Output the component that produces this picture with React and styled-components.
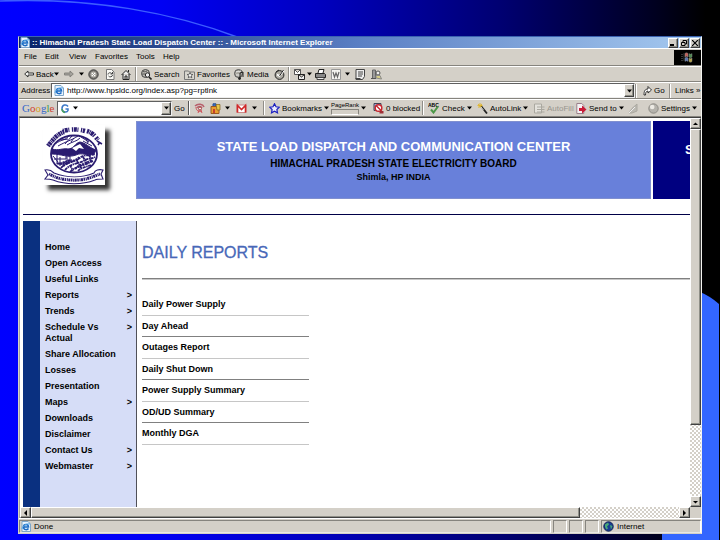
import React from "react";
import styled, { createGlobalStyle, css } from "styled-components";

const face = "#d4d0c8";
const sans = '"Liberation Sans", Arial, sans-serif';

const GlobalStyle = createGlobalStyle`
  * { box-sizing: border-box; }
  body { margin: 0; font-family: ${sans}; color: #000; background: #000060; }
  button, input { font: inherit; color: inherit; margin: 0; padding: 0; border: 0; background: none; border-radius: 0; }
  a { color: inherit; text-decoration: none; }
  svg { display: block; flex: none; }
`;

const Desktop = styled.div`
  position: relative;
  display: flex;
  height: 100vh;
  padding: 36px 18px 6px;
  background: linear-gradient(90deg, #0000ff 0%, #0000f4 22%, #0000c0 44%, #000070 70%, #000020 91%, #000000 98%);
  overflow: hidden;
`;

const Backdrop = styled.svg`
  position: absolute;
  inset: 0;
  width: 100%;
  height: 100%;
`;

const Window = styled.div`
  position: relative;
  flex: 1;
  min-width: 0;
  display: flex;
  flex-direction: column;
  background: ${face};
  border: solid;
  border-width: 1px;
  border-color: #3a62b0 #f4f4f0 ${face} ${face};
  font-size: 8px;
  white-space: nowrap;
`;

const TitleBar = styled.header`
  display: flex;
  align-items: center;
  gap: 2px;
  height: 11px;
  padding: 0 1px;
  color: #fff;
  background: linear-gradient(90deg, #0a246a, #5a7fc4 50%, #a6caf0);
`;

const Title = styled.h1`
  flex: 1;
  margin: 0;
  font-size: 8px;
  line-height: 10px;
`;

const raised = css`
  background: ${face};
  border: 1px solid;
  border-color: #fff #404040 #404040 #fff;
  box-shadow: inset -1px -1px #909088;
`;

const Caption = styled.button`
  ${raised}
  display: grid;
  place-items: center;
  width: 10px;
  height: 10px;
`;

const CaptionGroup = styled.div`
  display: flex;
  gap: 1px;
`;

const Bar = styled.div`
  display: flex;
  align-items: center;
  height: ${(p) => p.$h}px;
  padding-left: ${(p) => p.$pad || 0}px;
  border-top: 1px solid #fff;
  border-bottom: 1px solid #86847e;
`;

const MenuItem = styled.button`
  flex: 0 0 ${(p) => p.$w}px;
  text-align: left;
  line-height: 12px;
`;

const Throbber = styled.div`
  display: grid;
  place-items: center;
  width: 27px;
  height: 15px;
  margin-left: auto;
  background: #000;
`;

const Tool = styled.button`
  display: flex;
  align-items: center;
  gap: 2px;
  flex: 0 0 ${(p) => p.$w}px;
  height: 14px;
  color: ${(p) => (p.$dim ? "#98968f" : "#000")};
`;

const Separator = styled.span`
  flex: none;
  width: 2px;
  height: 14px;
  margin: 0 ${(p) => p.$after || 4}px 0 0;
  border-left: 1px solid ${(p) => (p.$dark ? "#555" : "#908e88")};
  border-right: 1px solid #fff;
`;

const Label = styled.label`
  flex: 0 0 ${(p) => p.$w}px;
`;

const Field = styled.div`
  display: flex;
  align-items: center;
  gap: 3px;
  height: 15px;
  padding-left: 2px;
  background: #fff;
  border: 1px solid;
  border-color: #606060 #eee #eee #606060;
  flex: ${(p) => (p.$w ? `0 0 ${p.$w}px` : "1")};
  min-width: 0;
`;

const TextBox = styled.input`
  flex: 1;
  min-width: 0;
  height: 11px;
  outline: none;
`;

const DropButton = styled.button`
  ${raised}
  display: grid;
  place-items: center;
  width: 10px;
  height: 13px;
`;

const GoogleWord = styled.span`
  flex: 0 0 35px;
  font: 11px "Liberation Serif", serif;
  color: #3566c8;
  b { font-weight: normal; color: #d04030; }
  i { font-style: normal; color: #d8a020; }
  u { text-decoration: none; color: #3c9a48; }
`;

const Rank = styled.span`
  display: flex;
  flex-direction: column;
  gap: 1px;
  font-size: 6px;
  line-height: 6px;
  &::after {
    content: "";
    height: 4px;
    border: 1px solid #86847e;
    border-bottom-color: #fff;
  }
`;

const Viewport = styled.div`
  flex: 1;
  min-height: 0;
  display: grid;
  grid-template-columns: minmax(0, 1fr) 11px;
  grid-template-rows: minmax(0, 1fr) 11px;
  border-top: 1px solid #404040;
  border-left: 1px solid #a8a69f;
`;

const Page = styled.main`
  display: flex;
  flex-direction: column;
  min-width: 0;
  padding: 3px 0 0 3px;
  background: #fff;
  overflow: hidden;
`;

const Masthead = styled.div`
  display: flex;
  gap: 2px;
  height: 78px;
`;

const LogoCell = styled.div`
  flex: 0 0 111px;
  padding: 4px 0 0 20px;
`;

const LogoFrame = styled.div`
  width: 62px;
  height: 60px;
  background: #fff;
  box-shadow: 5px 5px 4px #333;
`;

const Banner = styled.div`
  flex: 1;
  min-width: 0;
  display: flex;
  flex-direction: column;
  align-items: center;
  padding-top: 16px;
  background: #6880da;
  border: 1px solid #8090d0;
  font-weight: bold;
`;

const BannerTitle = styled.h2`
  margin: 0;
  color: #fff;
  font-size: 13px;
  line-height: 18px;
`;

const BannerBoard = styled.p`
  margin: 0;
  font-size: 10px;
  line-height: 16px;
`;

const BannerPlace = styled.p`
  margin: 0;
  font-size: 9px;
  line-height: 11px;
`;

const SidePanel = styled.div`
  flex: 0 0 37px;
  padding: 21px 0 0 32px;
  overflow: hidden;
  background: #000080;
  color: #fff;
  font-size: 13px;
  font-weight: bold;
`;

const Rule = styled.hr`
  width: 100%;
  margin: 15px 0 6px;
  border: 0;
  border-top: 1px solid #000048;
`;

const Body = styled.div`
  flex: 1;
  display: flex;
  min-height: 0;
`;

const Sidebar = styled.nav`
  flex: 0 0 114px;
  padding: 18px 4px 0 5px;
  border-left: 17px solid #0a3080;
  border-right: 1px solid #505058;
  background: #d6ddf7;
`;

const NavLink = styled.a`
  display: flex;
  justify-content: space-between;
  padding: 3px 0 2px;
  font-size: 9px;
  line-height: 11px;
  font-weight: bold;
`;

const NavText = styled.span`
  width: ${(p) => (p.$wrap ? "64px" : "auto")};
  white-space: ${(p) => (p.$wrap ? "normal" : "nowrap")};
`;

const Content = styled.section`
  flex: 1;
  min-width: 0;
  padding: 22px 0 0 5px;
`;

const Heading = styled.h3`
  margin: 0 0 15px;
  color: #4868b8;
  font-size: 16px;
  line-height: 20px;
  font-weight: normal;
  -webkit-text-stroke: 0.3px #4868b8;
`;

const Divider = styled.hr`
  margin: 0 0 14px;
  border: 0;
  border-top: 1px solid #808080;
  border-bottom: 1px solid #c8c8c8;
`;

const ReportList = styled.ul`
  width: 167px;
  margin: 0;
  padding: 0;
  list-style: none;
`;

const ReportItem = styled.li`
  height: 22px;
  padding-top: 4px;
  border-bottom: 1px solid #c6c6c6;
  font-size: 9px;
  line-height: 12px;
  font-weight: bold;
  &:nth-child(even) {
    height: 21px;
    border-color: #808080;
  }
`;

const Track = styled.div`
  display: flex;
  flex-direction: ${(p) => (p.$vertical ? "column" : "row")};
  background: repeating-conic-gradient(#d4d0c8 0 25%, #fff 0 50%) 0 0 / 4px 4px;
`;

const ArrowButton = styled.button`
  ${raised}
  display: grid;
  place-items: center;
  flex: none;
  width: 11px;
  height: 11px;
`;

const Thumb = styled.div`
  ${raised}
  flex: 0 0 ${(p) => p.$size};
`;

const Gap = styled.div`
  flex: 1;
`;

const Corner = styled.div`
  background: ${face};
`;

const StatusBar = styled.footer`
  display: flex;
  gap: 2px;
  height: 15px;
  padding-top: 1px;
  border-top: 1px solid #fff;
`;

const StatusCell = styled.div`
  display: flex;
  align-items: center;
  gap: 3px;
  flex: ${(p) => (p.$w ? `0 0 ${p.$w}px` : "1")};
  padding-left: 1px;
  border: 1px solid;
  border-color: #86847e #fff #e8e8e4 #86847e;
`;

const Svg = ({ w = 11, h = 11, children }) => (
  <svg width={w} height={h} viewBox={`0 0 ${w} ${h}`} aria-hidden="true" fill="none" stroke="#222">
    {children}
  </svg>
);

const Caret = () => (
  <Svg w={5} h={4}><path d="M0 .5h5L2.500 3.500z" fill="#000" stroke="none" /></Svg>
);

const arrows = {
  up: "M1 4h5L3.500 1.500z",
  down: "M1 2h5L3.500 4.500z",
  left: "M5 0v6L2 3z",
  right: "M2 0v6L5 3z",
};
const Arrow = ({ dir }) => (
  <Svg w={7} h={6}><path d={arrows[dir]} fill="#000" stroke="none" /></Svg>
);

const IePage = () => (
  <Svg w={10} h={11}>
    <path d="M1 .5h6l2.500 2.500v7.500H1z" fill="#e8f4ff" stroke="#7fa6c8" />
    <path d="M2.500 6h5c0-3.500-5-3.500-5 0s4 3 5 1.500" stroke="#1c6cc4" strokeWidth="1.500" />
    <path d="M1 8C1 5 6 2 9 3" stroke="#58a8e8" />
  </Svg>
);

const icons = {
  back: (
    <Svg w={10} h={8}><path d="M.7 4 4 1v2h5.500v2H4v2z" fill="#f4f4f0" strokeWidth=".9" /></Svg>
  ),
  forward: (
    <Svg w={10} h={8}><path d="M9.300 4 6 1v2H.5v2H6v2z" fill="#a4a29c" stroke="#807e78" strokeWidth=".9" /></Svg>
  ),
  stop: (
    <Svg><circle cx="5.500" cy="5.500" r="4.700" fill="#77756f" stroke="#444" /><circle cx="5.500" cy="5.500" r="2.500" fill="#aaa8a0" stroke="#c8c6c0" /><path d="m4 4 3 3m0-3-3 3" stroke="#fff" /></Svg>
  ),
  refresh: (
    <Svg><path d="M1.500.5h5l2.500 2.500v7.500H1.500z" fill="#fafaf6" stroke="#777" /><path d="M3 5.500C3 3.500 6 3 7 5M7.500 6c0 2-3 2.500-4 1M7.500 3v2H5.500" stroke="#444" /></Svg>
  ),
  home: (
    <Svg><path d="M.5 6 5 1.500 9.500 6M2 5v5.500h6V5M4 10.500V7h2v3.500M7.500 1v2" fill="#eee" /></Svg>
  ),
  search: (
    <Svg><circle cx="4.500" cy="4.500" r="4" fill="#bbb9b2" stroke="#444" /><path d="M2 2.500c2 1 3-1 4 0M1 5h3" stroke="#555" /><circle cx="6.500" cy="6" r="2.200" fill="#eee" /><path d="m8 8 2.500 2.500" strokeWidth="1.600" /></Svg>
  ),
  favorites: (
    <Svg><path d="M.5 2h4l1 1h5v7.500H.5z" fill="#d8d6cf" stroke="#777" /><path d="m6 3.500.8 1.800 2 .2-1.500 1.300.5 2L6 7.700 4.300 8.800l.4-2L3.200 5.500l2-.2z" fill="#fff" stroke="#333" strokeWidth=".7" /></Svg>
  ),
  media: (
    <Svg><circle cx="4.500" cy="4.500" r="4" fill="#aaa8a0" stroke="#555" /><path d="M2 3c2-1 3 0 5-1M2 6h4" stroke="#eee" /><path d="M6 10V4l3-1v5" /><circle cx="5.500" cy="9.500" r="1" fill="#222" /></Svg>
  ),
  history: (
    <Svg><circle cx="5.500" cy="6" r="4.400" fill="#aaa8a0" /><path d="M3 5.500 5.500 7 10 1.500" stroke="#fff" strokeWidth="1.500" /><path d="m5.500 7 4-6M2 3l3-2" /></Svg>
  ),
  mail: (
    <Svg><path d="M.5.500h6v5h-6zM.5.500l3 3 3-3" fill="#fff" stroke="#555" /><path d="M4.500 5.500h6v5h-6zM4.500 5.500l3 2.500 3-2.500" fill="#eee" /></Svg>
  ),
  print: (
    <Svg><path d="M3 4 4 .5h5L8 4" fill="#fff" /><path d="M.5 4.500h9l1 1v3h-10z" fill="#888" /><path d="M2 8.500h7v2H2z" fill="#eee" stroke="#444" /></Svg>
  ),
  word: (
    <Svg><path d="M.5.500h9v10h-9z" fill="#f4f4f0" stroke="#999" /><path d="m2 3 1.500 5L5 4l1.500 4L8 3" stroke="#666" strokeWidth="1.200" /></Svg>
  ),
  discuss: (
    <Svg><path d="M1 .5h8.500v7l-2 3H1z" fill="#eee" stroke="#444" /><path d="M3 3h5M3 5h5M3 7h4M.5 9.500h5" stroke="#444" /></Svg>
  ),
  messenger: (
    <Svg><path d="M1.500 1h3v8.500h-3z" fill="#999" stroke="#666" /><circle cx="7" cy="4" r="2" fill="#eee" stroke="#555" /><path d="M5 9V6.500h4l1.500 3.500z" fill="#d8d08a" stroke="#888" /><path d="M0 9.500h5" stroke="#555" /></Svg>
  ),
  go: (
    <Svg w={9}><path d="M1 10C1 6 2 4 5 4V1.500L8.500 5 5 8V6C3 6 2.500 8 2.500 10z" fill="#fff" strokeWidth=".9" /></Svg>
  ),
  antenna: (
    <Svg><path d="M1 3c3-3 8-2 9 1M3 5c1-2 4-2 5 0" stroke="#b8606c" strokeWidth="1.500" /><path d="M2 4c0 4 3 5 6 4M4 10l2-5 2 5" stroke="#d05058" /><circle cx="6" cy="5.500" r="1.500" fill="#eee" stroke="#a44" /></Svg>
  ),
  news: (
    <Svg><path d="M1 3.500h8v7H1z" fill="#e8a030" stroke="#9a5820" /><path d="M3 3V.8h3V3" fill="#3c70c8" stroke="#285098" /><path d="M3 6h2v4H3z" fill="#c8402c" stroke="none" /><path d="M6 1.500h4V7H7z" fill="#e8c848" stroke="#806020" strokeWidth=".7" /></Svg>
  ),
  gmail: (
    <Svg><path d="M.8 2h9.400v7.500H.8z" fill="#fff" stroke="#c88" /><path d="M1.500 9.500v-7l4 4 4-4v7" stroke="#d02828" strokeWidth="1.600" /></Svg>
  ),
  star: (
    <Svg><path d="m5.500.8 1.500 3 3.300.4L7.900 6.500l.6 3.400-3-1.600-3 1.600.6-3.400L.7 4.200 4 3.800z" fill="#eef" stroke="#1c20c0" strokeWidth="1.200" /></Svg>
  ),
  blocked: (
    <Svg><path d="M1 .5h7v7H1z" fill="#9cb0e0" stroke="#445" /><circle cx="5.500" cy="5" r="3.300" fill="#fff" stroke="#c82830" strokeWidth="1.500" /><path d="m3.300 2.800 5 5" stroke="#c82830" strokeWidth="1.400" /><path d="M6.500 8h4v2.500h-4z" fill="#a03038" stroke="none" /></Svg>
  ),
  spell: (
    <Svg w={12} h={12}>
      <text x="0" y="5" fontSize="5" fontFamily="Liberation Sans, sans-serif" fontWeight="bold" fill="#000" stroke="none">ABC</text>
      <path d="m3 7.500 2.500 3L10 4.500" stroke="#4c9848" strokeWidth="2" />
    </Svg>
  ),
  wand: (
    <Svg><path d="m4 3 6 7.500" strokeWidth="1.800" /><path d="M3 0v5M.5 2.500h5M1 1l4 3.500M5 1 1 4.500" stroke="#e0b428" strokeWidth=".9" /><path d="m4 4 2.500 3" stroke="#eee" strokeWidth=".8" /></Svg>
  ),
  form: (
    <Svg><path d="M.5 1h7v9h-7z" fill="#e4e2dc" stroke="#aaa8a0" /><path d="M3 4h7.500M3 6.500h7.500M3 9h7.500" stroke="#aaa8a0" /></Svg>
  ),
  send: (
    <Svg><path d="M.8.500h5l2 2v8h-7z" fill="#f6f2f4" stroke="#99808a" /><path d="M3 5h3V2.500L10.500 6.500 6 10.500V8H3z" fill="#c81c38" stroke="none" /></Svg>
  ),
  pen: (
    <Svg><path d="M1 10 4 5.500 9 1v7l-5 2z" fill="#bbb9b2" stroke="#aaa8a0" /><path d="m1 10 6-6" stroke="#eee" /></Svg>
  ),
  ball: (
    <Svg><circle cx="5.500" cy="5.500" r="4.700" fill="#b4b2ac" stroke="#8c8a84" /><circle cx="4.200" cy="4" r="2.300" fill="#eceae4" stroke="none" /></Svg>
  ),
};

const Globe = () => (
  <Svg><circle cx="5.500" cy="5.500" r="4.700" fill="#183c94" stroke="#102050" /><path d="M2 3.500 5 1.500l1 2-2 2 1 2-1.500 1L2 6zM7 4l2.500 1L8 8.500z" fill="#48a878" stroke="none" /></Svg>
);

const WindowsFlag = () => (
  <Svg w={14} h={11}>
    <path d="M1 2v7M3 1.500v7" stroke="#666" strokeDasharray="1 1" />
    <path d="M4 1.500c1-1 2-1 3 0V5c-1-1-2-1-3 0z" fill="#c06058" stroke="#999" strokeWidth=".4" />
    <path d="M8 1.500c1 1 2 1 3 0V5c-1 1-2 1-3 0z" fill="#4c8850" stroke="#999" strokeWidth=".4" />
    <path d="M4 6c1-1 2-1 3 0v3.500c-1-1-2-1-3 0z" fill="#5874b0" stroke="#999" strokeWidth=".4" />
    <path d="M8 6c1 1 2 1 3 0v3.500c-1 1-2 1-3 0z" fill="#b0a048" stroke="#999" strokeWidth=".4" />
  </Svg>
);

const Emblem = () => (
  <svg width="62" height="60" viewBox="0 0 62 60" role="img" aria-label="Himachal Pradesh State Electricity Board" fill="none" stroke="#2a1c70">
    <path d="M5 21C11 13 15 9 21 7" strokeWidth="4.500" strokeDasharray="1.500 .5 2.500 .6 1 .5 2 .5" />
    <path d="M20 6c7-2 15-2 22 0" strokeWidth="4.500" strokeDasharray="1.200 .7 3 .6 1 2.500" />
    <path d="M44 6c6 2 8 5 11 9" strokeWidth="4.500" strokeDasharray="2 .6 1 .6 3 .5 1.500 2" />
    <path d="M54 16l5 3M55 20l2-3" strokeWidth="1.500" />
    <ellipse cx="31" cy="29" rx="23" ry="18.500" fill="#fff" strokeWidth="1.800" />
    <path d="M9 24c7 2 10-1 16 0 6 0 7-6 12-7 6 1 8 5 16 8l-2 4c-8 2-12-2-18 1-8 3-15-1-24-1z" fill="#2a1c70" />
    <path d="m29 23 8-4 4 5-5-1-3 3z" fill="#fff" stroke="none" />
    <path d="M12 19c7-5 9-3 14-8M15 21c9-5 12-5 20-10M24 20c6-4 9-3 13-7M38 12l8 5M29 11l-7 8M40 16l9 5M18 15l7-1M31 13l-3 4M43 14l2 4" strokeWidth="1" />
    <path d="M11 34h12v-3h4v5M14 30v9h7M17 32v9M24 32v8M10 31l5 6" strokeWidth="1" />
    <path d="M18 43c7-8 14-5 20-11 5-3 10-1 14-3M22 45c7-8 15-6 20-10 4-2 7-1 10-3M27 47c6-6 13-6 23-11M14 38c6 2 8-2 15-3M35 46c4-4 9-4 13-6M27 40l3 6M34 36l4 7M40 32l5 8M46 30l3 6" strokeWidth="1.800" strokeDasharray="3 .6 1.500 .6" />
    <path d="M20 41c6-5 12-4 17-9M32 44c5-5 11-5 17-9M17 39c3-2 6-1 9-4" strokeWidth="2.400" strokeDasharray="2 .8" />
    <path d="M2 45c5-1 8 2 9 3 13 5 28 5 40 0 1-3 5-4 9-3l-2 4 2 5c-4 0-6 0-8 1-13 5-29 5-42 0-3-1-5-1-8-1l3-4z" fill="#fff" strokeWidth="1.100" />
    <path d="M6 49c4 2 6 3 9 4 11 3 24 3 34-1 3-1 5-2 8-3" strokeWidth="3" strokeDasharray="1 .5 2 .6 1.500 .7" />
  </svg>
);

const menus = [["File", 21], ["Edit", 24], ["View", 26], ["Favorites", 41], ["Tools", 27], ["Help", 20]];

const standard = [
  ["back", 30, "Back"], ["caret", 10], ["forward", 15], ["caret", 9], ["stop", 17],
  ["refresh", 16], ["home", 14], ["sep"], ["search", 43, "Search"], ["favorites", 50, "Favorites"],
  ["media", 40, "Media"], ["history", 14], ["sep"], ["mail", 13], ["caret", 8], ["print", 16],
  ["word", 14], ["caret", 10], ["discuss", 16], ["messenger", 11],
];

const nav = [
  ["Home"], ["Open Access"], ["Useful Links"], ["Reports", 1], ["Trends", 1],
  ["Schedule Vs Actual", 1], ["Share Allocation"], ["Losses"], ["Presentation"], ["Maps", 1],
  ["Downloads"], ["Disclaimer"], ["Contact Us", 1], ["Webmaster", 1],
];

const reports = [
  "Daily Power Supply", "Day Ahead", "Outages Report", "Daily Shut Down",
  "Power Supply Summary", "OD/UD Summary", "Monthly DGA",
];

const CaretTool = ({ w }) => (
  <Tool $w={w} aria-label="More options"><Caret /></Tool>
);

export default function App() {
  return (
    <>
      <GlobalStyle />
      <Desktop>
        <Backdrop viewBox="0 0 720 540" preserveAspectRatio="none" aria-hidden="true">
          <path d="M0 1C90-3 175 13 240 38" fill="none" stroke="#3c5cff" strokeWidth="1.500" />
          <path d="M700 292Q710 296 719 304V540H662V530H700z" fill="#3366ff" />
        </Backdrop>
        <Window>
          <TitleBar>
            <IePage />
            <Title>:: Himachal Pradesh State Load Dispatch Center :: - Microsoft Internet Explorer</Title>
            <CaptionGroup>
              <Caption aria-label="Minimize"><Svg w={6} h={6}><path d="M0 5h4" strokeWidth="2" stroke="#000" /></Svg></Caption>
              <Caption aria-label="Restore"><Svg w={6} h={6}><path d="M2 2V.5h3.500V4H4M.5 2.500H4v3H.5z" stroke="#000" /></Svg></Caption>
              <Caption aria-label="Close"><Svg w={6} h={6}><path d="m0 0 6 6M6 0 0 6" stroke="#000" strokeWidth="1.200" /></Svg></Caption>
            </CaptionGroup>
          </TitleBar>

          <Bar as="nav" $h={18} $pad={5}>
            {menus.map(([name, w]) => <MenuItem key={name} $w={w}>{name}</MenuItem>)}
            <Throbber><WindowsFlag /></Throbber>
          </Bar>

          <Bar $h={16} $pad={5}>
            {standard.map(([kind, w, text], i) => {
              if (kind === "sep") return <Separator key={i} />;
              if (kind === "caret") return <CaretTool key={i} w={w} />;
              return <Tool key={i} $w={w} aria-label={text || kind}>{icons[kind]}{text}</Tool>;
            })}
          </Bar>

          <Bar $h={17} $pad={2}>
            <Label htmlFor="address" $w={30}>Address</Label>
            <Field>
              <IePage />
              <TextBox id="address" defaultValue="http://www.hpsldc.org/index.asp?pg=rptlnk" />
              <DropButton aria-label="Show addresses"><Caret /></DropButton>
            </Field>
            <Separator $after={6} />
            <Tool $w={26}>{icons.go}Go</Tool>
            <Separator />
            <Tool $w={26}>Links »</Tool>
          </Bar>

          <Bar $h={18} $pad={3}>
            <GoogleWord>G<b>o</b><i>o</i>g<u>l</u><b>e</b></GoogleWord>
            <Field $w={115}>
              <Svg w={10}><path d="M8 3.500C6.500 1 2 1.500 2 5.500s5 4.500 6 2V6H5.500" stroke="#3c78c8" strokeWidth="1.500" /><path d="M2 6c0 2 1 3 3 3.500" stroke="#48a060" strokeWidth="1.500" /></Svg>
              <Caret />
              <TextBox aria-label="Google search" />
              <DropButton aria-label="Search history"><Caret /></DropButton>
            </Field>
            <Label as="span" $w={2} />
            <Tool $w={14}>Go</Tool>
            <Separator $dark />
            <Tool $w={16} aria-label="PageRank news">{icons.antenna}</Tool>
            <Tool $w={15} aria-label="News">{icons.news}</Tool>
            <CaretTool w={11} />
            <Tool $w={16} aria-label="Gmail">{icons.gmail}</Tool>
            <CaretTool w={11} />
            <Separator />
            <Tool $w={62}>{icons.star}Bookmarks<Caret /></Tool>
            <Tool $w={42}><Rank>PageRank</Rank><Caret /></Tool>
            <Tool $w={49}>{icons.blocked}0 blocked</Tool>
            <Separator />
            <Tool $w={49}>{icons.spell}Check<Caret /></Tool>
            <Tool $w={57}>{icons.wand}AutoLink<Caret /></Tool>
            <Tool $w={42} $dim>{icons.form}AutoFill</Tool>
            <Tool $w={52}>{icons.send}Send to<Caret /></Tool>
            <Tool $w={20} aria-label="Highlight">{icons.pen}</Tool>
            <Tool $w={50}>{icons.ball}Settings<Caret /></Tool>
          </Bar>

          <Viewport>
            <Page>
              <Masthead>
                <LogoCell><LogoFrame><Emblem /></LogoFrame></LogoCell>
                <Banner>
                  <BannerTitle>STATE LOAD DISPATCH AND COMMUNICATION CENTER</BannerTitle>
                  <BannerBoard>HIMACHAL PRADESH STATE ELECTRICITY BOARD</BannerBoard>
                  <BannerPlace>Shimla, HP INDIA</BannerPlace>
                </Banner>
                <SidePanel>S</SidePanel>
              </Masthead>
              <Rule />
              <Body>
                <Sidebar>
                  {nav.map(([name, more]) => (
                    <NavLink key={name} href="#">
                      <NavText $wrap={name.startsWith("Schedule")}>{name}</NavText>
                      {more && <span>&gt;</span>}
                    </NavLink>
                  ))}
                </Sidebar>
                <Content>
                  <Heading>DAILY REPORTS</Heading>
                  <Divider />
                  <ReportList>
                    {reports.map((r) => <ReportItem key={r}><a href="#">{r}</a></ReportItem>)}
                  </ReportList>
                </Content>
              </Body>
            </Page>
            <Track $vertical>
              <ArrowButton aria-label="Scroll up"><Arrow dir="up" /></ArrowButton>
              <Thumb $size="76%" />
              <Gap />
              <ArrowButton aria-label="Scroll down"><Arrow dir="down" /></ArrowButton>
            </Track>
            <Track>
              <ArrowButton aria-label="Scroll left"><Arrow dir="left" /></ArrowButton>
              <Thumb $size="82%" />
              <Gap />
              <ArrowButton aria-label="Scroll right"><Arrow dir="right" /></ArrowButton>
            </Track>
            <Corner />
          </Viewport>

          <StatusBar>
            <StatusCell><IePage />Done</StatusCell>
            <StatusCell $w={14} />
            <StatusCell $w={14} />
            <StatusCell $w={14} />
            <StatusCell $w={100}><Globe />Internet</StatusCell>
          </StatusBar>
        </Window>
      </Desktop>
    </>
  );
}
